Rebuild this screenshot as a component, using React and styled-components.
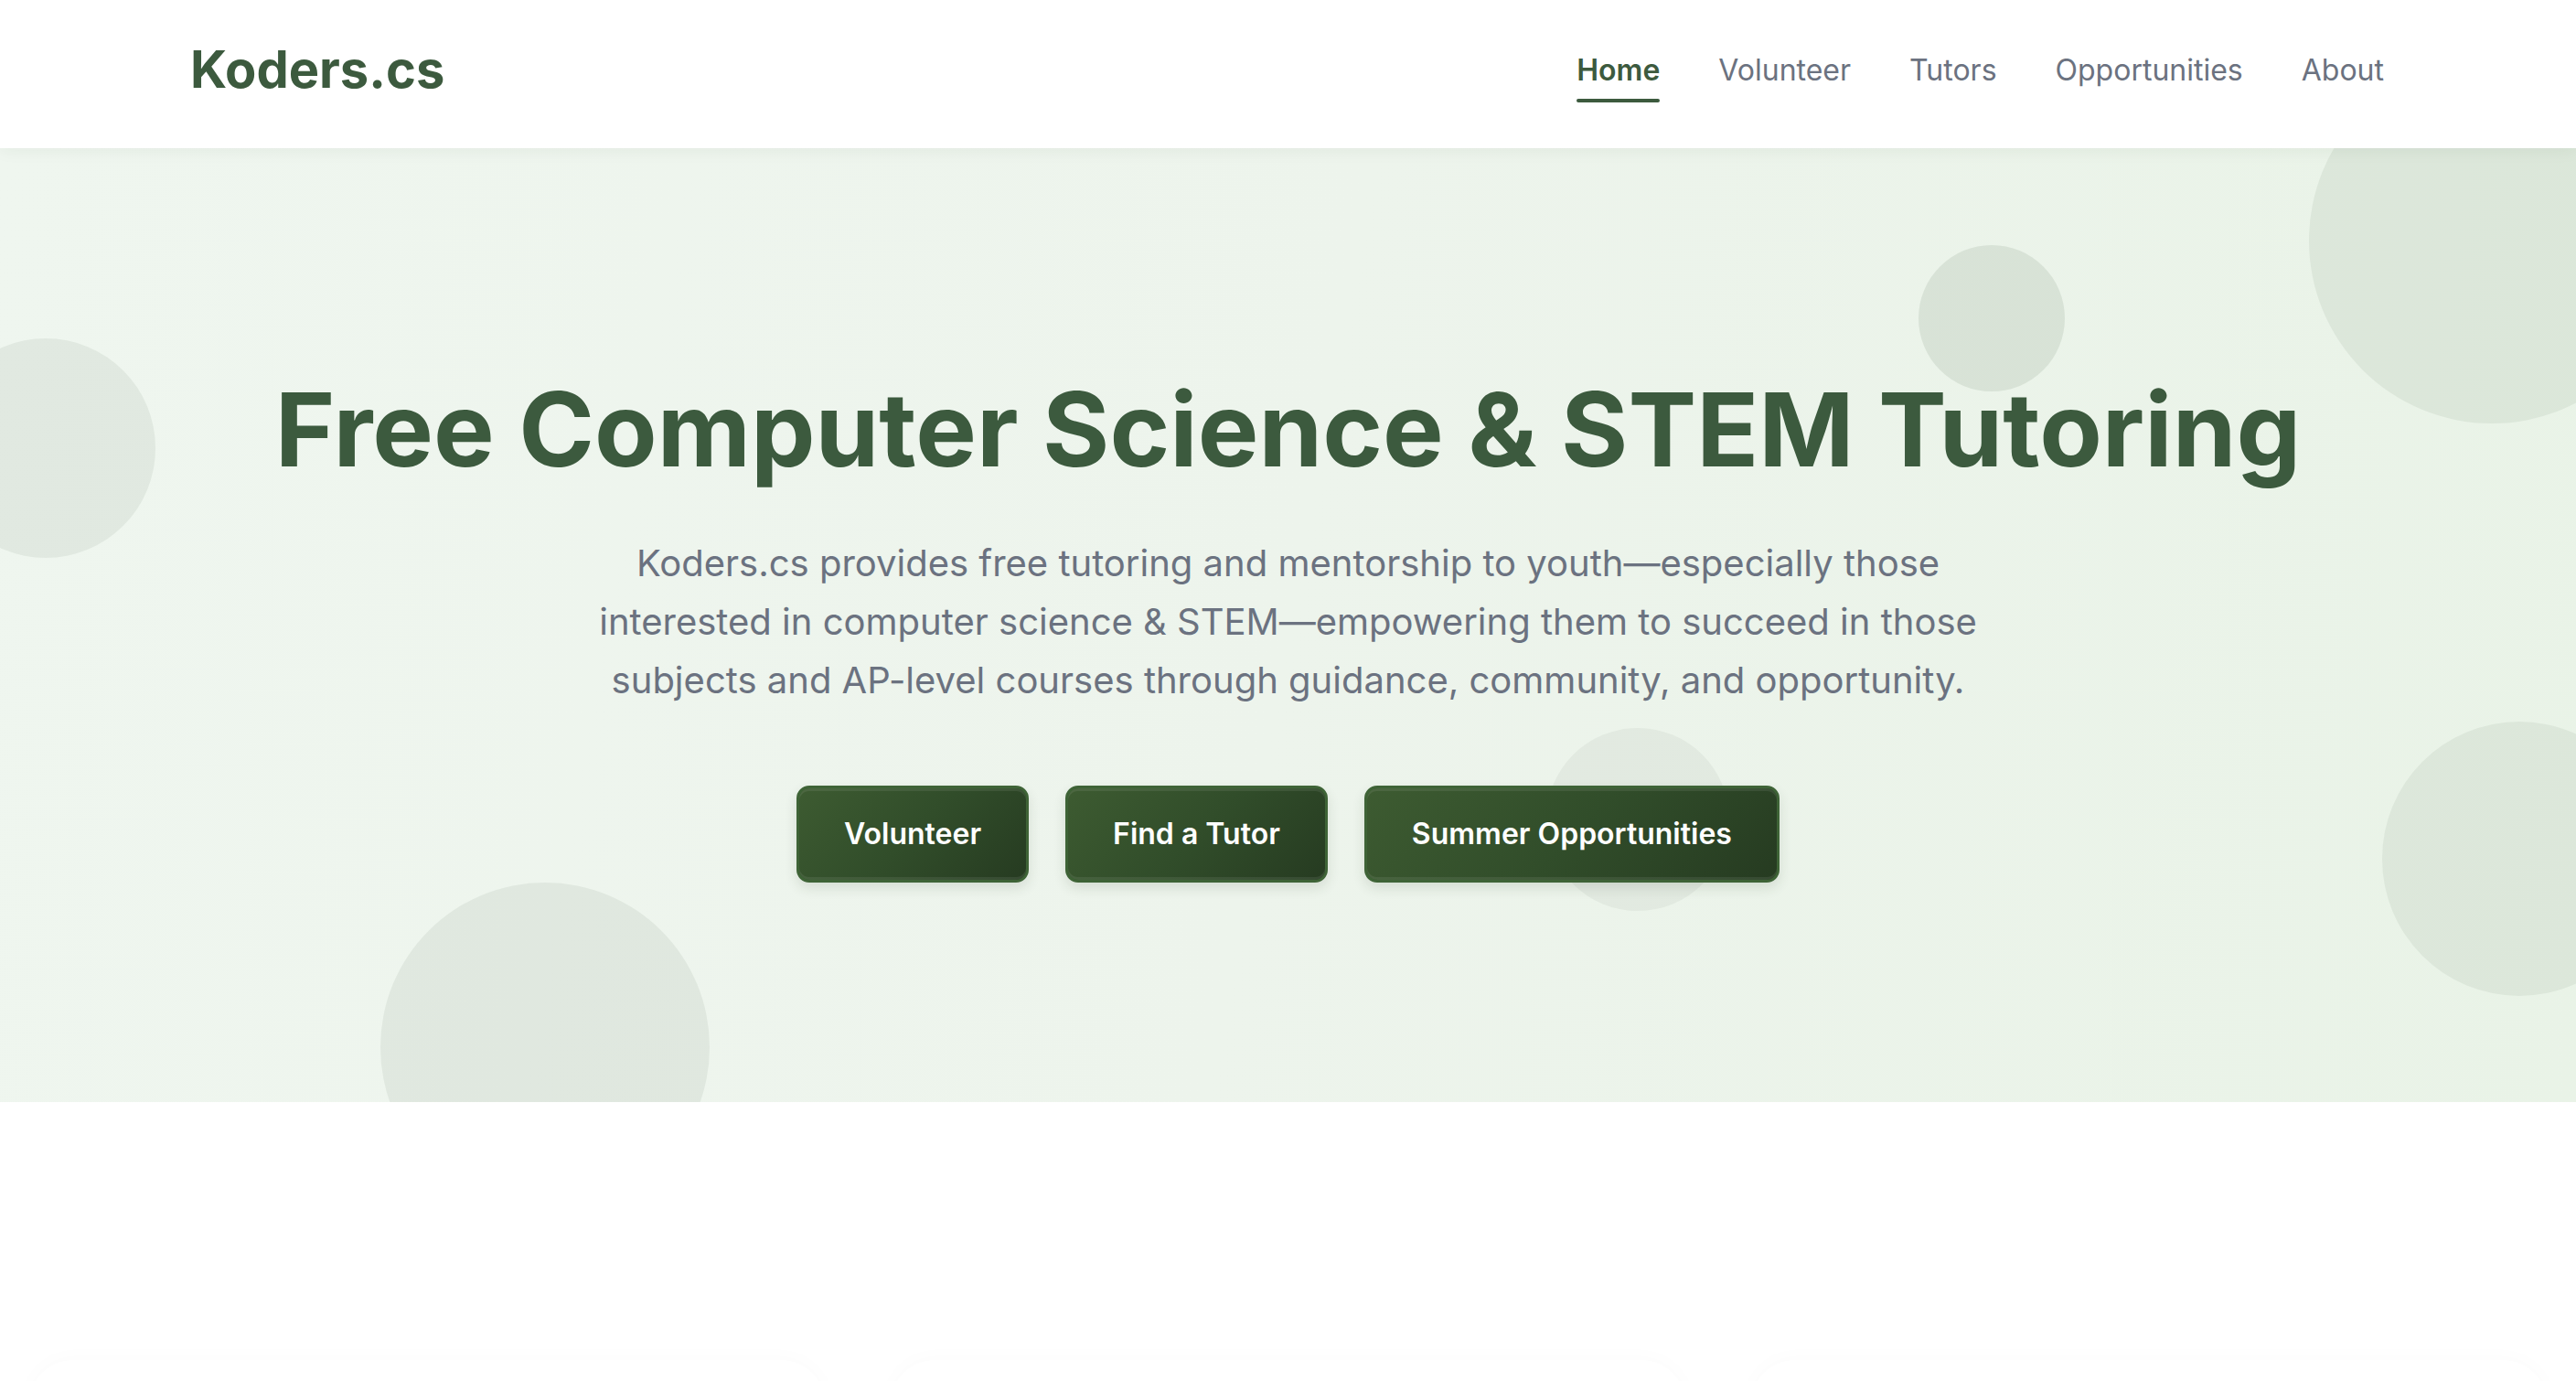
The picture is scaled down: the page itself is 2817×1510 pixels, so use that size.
import React from 'react';
import styled, { createGlobalStyle } from 'styled-components';

const GlobalStyle = createGlobalStyle`
    * { box-sizing: border-box; }
    body {
        margin: 0;
        font-family: Inter, "Noto Sans", "Liberation Sans", sans-serif;
        background: #ffffff;
        overflow-x: hidden;
    }
`

const Header = styled.header`
    position: relative;
    z-index: 2;
    height: 162px;
    background: #ffffff;
    box-shadow: 0 2px 18px rgba(30, 50, 30, 0.06);
`

const Container = styled.div`
    width: 100%;
    max-width: 2397px;
    margin: 0 auto;
`

const NavBar = styled(Container)`
    height: 100%;
    display: flex;
    align-items: center;
    justify-content: space-between;
    padding-bottom: 8px;
`

const Logo = styled.a`
    margin-left: -2px;
    font-size: 56px;
    font-weight: 700;
    color: #3c5a3e;
    text-decoration: none;
    line-height: 1.2;
`

const NavList = styled.ul`
    display: flex;
    align-items: center;
    gap: 64px;
    list-style: none;
    margin: 0;
    padding: 0;
`

const NavLink = styled.a`
    position: relative;
    display: block;
    font-size: 32px;
    line-height: 1.2;
    font-weight: ${p => (p.$active ? 600 : 400)};
    color: ${p => (p.$active ? '#3c5a3e' : '#6b7280')};
    text-decoration: none;

    &::after {
        content: '';
        display: ${p => (p.$active ? 'block' : 'none')};
        position: absolute;
        left: 0;
        right: 0;
        top: calc(100% + 12px);
        height: 4px;
        border-radius: 2px;
        background: #3c5a3e;
    }
`

const Hero = styled.section`
    position: relative;
    overflow: hidden;
    height: 1043px;
    display: flex;
    flex-direction: column;
    align-items: center;
    justify-content: center;
    background: linear-gradient(100deg, #eff6ef 0%, #edf4ec 50%, #e9f3e7 100%);
`

const Bubble = styled.span`
    position: absolute;
    border-radius: 50%;
    background: rgba(61, 90, 62, ${p => p.$alpha || 0.09});
    pointer-events: none;
`

const HeroContent = styled.div`
    position: relative;
    z-index: 1;
    display: flex;
    flex-direction: column;
    align-items: center;
    text-align: center;
`

const Title = styled.h1`
    margin: 0;
    font-size: 112px;
    line-height: 1.2;
    font-weight: 700;
    color: #3c5a3e;
`

const Lead = styled.p`
    margin: 47px 0 0;
    max-width: 1600px;
    font-size: 40px;
    line-height: 1.6;
    color: #6b7280;
`

const Actions = styled.div`
    display: flex;
    gap: 40px;
    margin-top: 83px;
`

const Button = styled.a`
    display: inline-block;
    padding: 31px 49px;
    font-size: 32px;
    line-height: 1.2;
    font-weight: 600;
    color: #ffffff;
    text-decoration: none;
    border-radius: 14px;
    border: 3px solid #3e6336;
    background: linear-gradient(135deg, #3d5b31 0%, #314d2a 50%, #263b21 100%);
    box-shadow: inset 0 3px 0 rgba(255, 255, 255, 0.08),
        inset 0 -3px 0 rgba(255, 255, 255, 0.08),
        0 6px 14px rgba(38, 59, 33, 0.12);
`

const Cards = styled.section`
    display: grid;
    grid-template-columns: repeat(3, 1fr);
    gap: 72px;
    padding: 282px 32px 0;
`

const Card = styled.div`
    height: 400px;
    border-radius: 48px;
    background: #ffffff;
    box-shadow: 0 -2px 24px rgba(0, 0, 0, 0.02);
`

const bubbles = [
    { size: 240, left: -70, top: 208, alpha: 0.08 },
    { size: 360, left: 416, top: 803, alpha: 0.08 },
    { size: 160, left: 2098, top: 106, alpha: 0.11 },
    { size: 400, left: 2525, top: -99, alpha: 0.08 },
    { size: 300, left: 2605, top: 627, alpha: 0.075 },
    { size: 200, left: 1691, top: 634, alpha: 0.06 },
]

const links = ['Home', 'Volunteer', 'Tutors', 'Opportunities', 'About']

export default function App() {
    return (
        <>
            <GlobalStyle />
            <Header>
                <NavBar>
                    <Logo href="#">Koders.cs</Logo>
                    <NavList>
                        {links.map(l => (
                            <li key={l}>
                                <NavLink href="#" $active={l === 'Home'}>{l}</NavLink>
                            </li>
                        ))}
                    </NavList>
                </NavBar>
            </Header>
            <Hero>
                {bubbles.map((b, i) => (
                    <Bubble
                        key={i}
                        $alpha={b.alpha}
                        style={{ width: b.size, height: b.size, left: b.left, top: b.top }}
                    />
                ))}
                <HeroContent>
                    <Title>Free Computer Science &amp; STEM Tutoring</Title>
                    <Lead>
                        Koders.cs provides free tutoring and mentorship to youth—especially those
                        interested in computer science &amp; STEM—empowering them to succeed in those
                        subjects and AP-level courses through guidance, community, and opportunity.
                    </Lead>
                    <Actions>
                        <Button href="#">Volunteer</Button>
                        <Button href="#">Find a Tutor</Button>
                        <Button href="#">Summer Opportunities</Button>
                    </Actions>
                </HeroContent>
            </Hero>
            <Cards>
                <Card />
                <Card />
                <Card />
            </Cards>
        </>
    );
}
